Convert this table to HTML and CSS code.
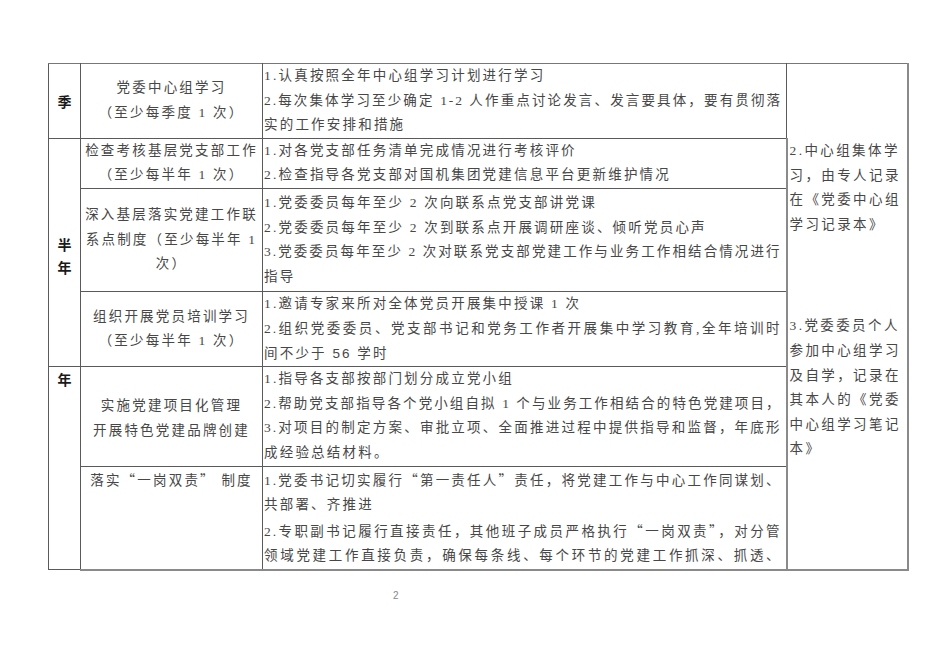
FILE: index.html
```html
<!DOCTYPE html>
<html lang="zh-CN">
<head>
<meta charset="utf-8">
<title>党建工作安排</title>
<link rel="stylesheet" href="styles.css">
</head>
<body>
<table class="plan">
  <colgroup>
    <col class="c-period">
    <col class="c-item">
    <col class="c-task">
    <col class="c-note">
  </colgroup>
  <tbody>
    <tr class="r1">
      <td class="period mid">季</td>
      <td class="item mid">党委中心组学习<br>（至少每季度 1 次）</td>
      <td class="task">
        <div class="ln">1.认真按照全年中心组学习计划进行学习</div>
        <div class="ln j">2.每次集体学习至少确定 1-2 人作重点讨论发言、发言要具体，要有贯彻落</div>
        <div class="ln">实的工作安排和措施</div>
      </td>
      <td class="note" rowspan="6">
        <div class="note-block first">2.中心组集体学<br>习，由专人记录<br>在《党委中心组<br>学习记录本》</div>
        <div class="note-block second">3.党委委员个人<br>参加中心组学习<br>及自学，记录在<br>其本人的《党委<br>中心组学习笔记<br>本》</div>
      </td>
    </tr>
    <tr class="r2">
      <td class="period mid tall" rowspan="3">半<br>年</td>
      <td class="item mid">检查考核基层党支部工作<br>（至少每半年 1 次）</td>
      <td class="task">
        <div class="ln">1.对各党支部任务清单完成情况进行考核评价</div>
        <div class="ln">2.检查指导各党支部对国机集团党建信息平台更新维护情况</div>
      </td>
    </tr>
    <tr class="r3">
      <td class="item mid">深入基层落实党建工作联<br>系点制度（至少每半年 1<br>次）</td>
      <td class="task">
        <div class="ln">1.党委委员每年至少 2 次向联系点党支部讲党课</div>
        <div class="ln">2.党委委员每年至少 2 次到联系点开展调研座谈、倾听党员心声</div>
        <div class="ln j">3.党委委员每年至少 2 次对联系党支部党建工作与业务工作相结合情况进行</div>
        <div class="ln">指导</div>
      </td>
    </tr>
    <tr class="r4">
      <td class="item mid">组织开展党员培训学习<br>（至少每半年 1 次）</td>
      <td class="task">
        <div class="ln">1.邀请专家来所对全体党员开展集中授课 1 次</div>
        <div class="ln j">2.组织党委委员、党支部书记和党务工作者开展集中学习教育,全年培训时</div>
        <div class="ln">间不少于 <span class="sans">56</span> 学时</div>
      </td>
    </tr>
    <tr class="r5">
      <td class="period top" rowspan="2">年</td>
      <td class="item mid low">实施党建项目化管理<br>开展特色党建品牌创建</td>
      <td class="task">
        <div class="ln">1.指导各支部按部门划分成立党小组</div>
        <div class="ln j">2.帮助党支部指导各个党小组自拟 1 个与业务工作相结合的特色党建项目，</div>
        <div class="ln j">3.对项目的制定方案、审批立项、全面推进过程中提供指导和监督，年底形</div>
        <div class="ln">成经验总结材料。</div>
      </td>
    </tr>
    <tr class="r6">
      <td class="item top">落实<span class="q">“</span>一岗双责<span class="q">”</span> 制度</td>
      <td class="task">
        <div class="ln j">1.党委书记切实履行<span class="q">“</span>第一责任人<span class="q">”</span>责任，将党建工作与中心工作同谋划、</div>
        <div class="ln">共部署、齐推进</div>
        <div class="ln j">2.专职副书记履行直接责任，其他班子成员严格执行<span class="q">“</span>一岗双责<span class="q">”</span>，对分管</div>
        <div class="ln j">领域党建工作直接负责，确保每条线、每个环节的党建工作抓深、抓透、</div>
      </td>
    </tr>
  </tbody>
</table>
<div class="page-no">2</div>
</body>
</html>
```

FILE: styles.css
```css
html, body {
  margin: 0;
  padding: 0;
  background: #ffffff;
}

body {
  font-family: "Liberation Serif", "Noto Sans CJK SC", serif;
  font-size: 13.5px;
  color: #474747;
}

.plan {
  table-layout: fixed;
  border-collapse: collapse;
  width: 859px;
  margin: 63px 0 0 48px;
  border: 1px solid #777;
}

.c-period { width: 32px; }
.c-item { width: 182px; }
.c-task { width: 524px; }
.c-note { width: 121px; }

.plan td {
  border: 1px solid #5a5a5a;
  padding: 0;
  line-height: 24.6px;
  letter-spacing: 2.2px;
  vertical-align: middle;
}

.plan tr:first-child td { border-top-color: #777; }
.plan td:last-child { border-right: 2px solid #8a8a8a; }
.plan tr.r6 td, .plan td.note { border-bottom: 2px solid #8a8a8a; }

.period {
  text-align: center;
  font-family: "Noto Sans CJK SC", sans-serif;
  font-weight: 700;
  font-size: 14px;
  color: #1a1a1a;
}

.plan td.period { letter-spacing: 0; }
.plan td.period.tall { line-height: 23px; padding-top: 7px; }

.item {
  text-align: center;
}

.mid { vertical-align: middle; }
.plan td.top { vertical-align: top; }
.plan td.low { padding-top: 5px; }

.plan td.task { padding: 0 4px 0 1px; vertical-align: top; }
.plan tr.r3 td.task { padding-top: 2px; padding-bottom: 2px; }

.ln {
  white-space: nowrap;
  overflow: hidden;
}

.ln.j {
  letter-spacing: 1.9px;
  text-align: justify;
  text-align-last: justify;
}

.q {
  font-family: "Noto Sans CJK SC", sans-serif;
}

.sans {
  font-family: "Liberation Sans", sans-serif;
}

.plan td.note {
  vertical-align: top;
  padding: 0 0 0 2px;
  letter-spacing: 2.4px;
}

.note-block.first { margin-top: 75px; }
.note-block.second { margin-top: 77px; }

.page-no {
  margin: 19px 0 0 393px;
  font-size: 10px;
  line-height: 12px;
  color: #888;
  font-family: "Liberation Sans", sans-serif;
}
```
